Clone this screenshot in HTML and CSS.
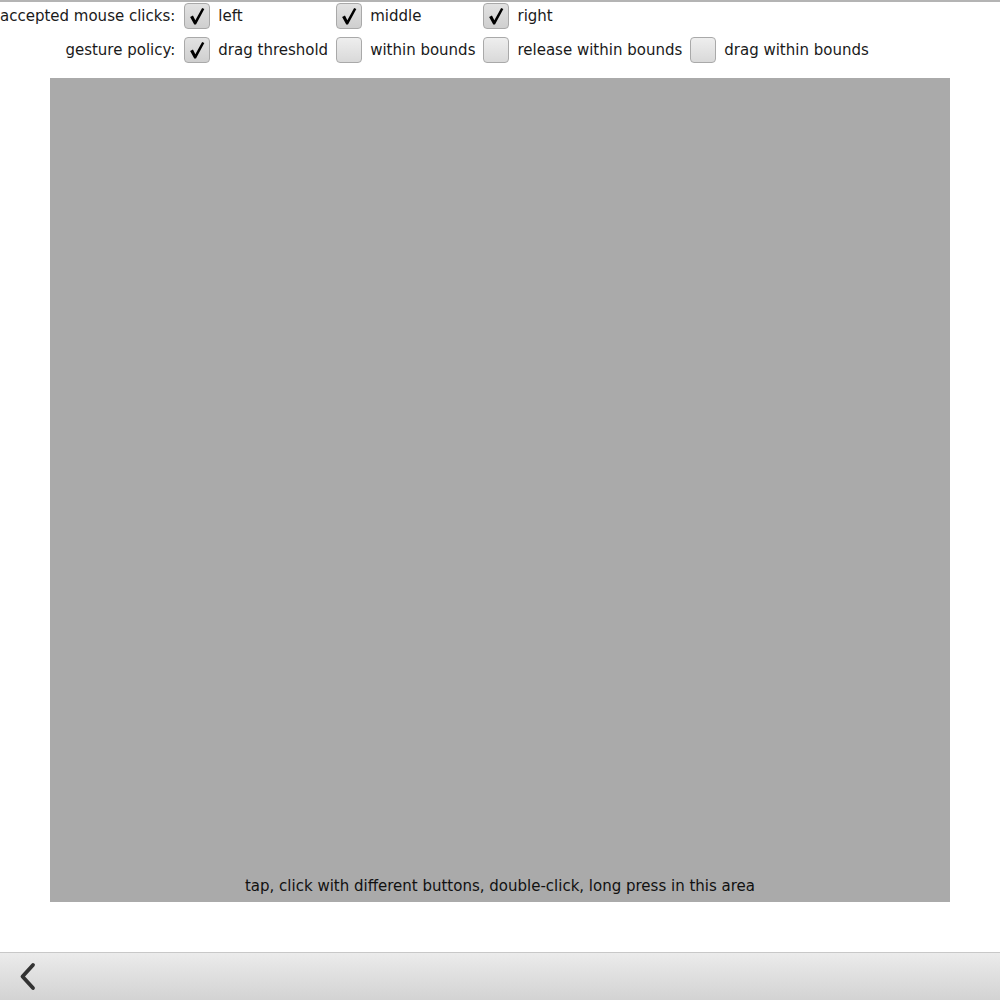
FILE: index.html
```html
<!DOCTYPE html>
<html>
<head>
<meta charset="utf-8">
<link rel="stylesheet" href="styles.css">
</head>
<body>
<div class="page">
  <div class="controls">
    <div class="label">accepted mouse clicks:</div>
    <div class="opt"><span class="box checked"><svg class="tick" viewBox="0 0 24 24"><path d="M4.5 13.2 L7.6 11.4 L10.2 16.6 L17.6 3.2 L20 4.4 L10.9 21.2 L9 21.2 Z"/></svg></span><span>left</span></div>
    <div class="opt"><span class="box checked"><svg class="tick" viewBox="0 0 24 24"><path d="M4.5 13.2 L7.6 11.4 L10.2 16.6 L17.6 3.2 L20 4.4 L10.9 21.2 L9 21.2 Z"/></svg></span><span>middle</span></div>
    <div class="opt"><span class="box checked"><svg class="tick" viewBox="0 0 24 24"><path d="M4.5 13.2 L7.6 11.4 L10.2 16.6 L17.6 3.2 L20 4.4 L10.9 21.2 L9 21.2 Z"/></svg></span><span>right</span></div>
    <div class="opt empty"></div>

    <div class="label">gesture policy:</div>
    <div class="opt"><span class="box checked"><svg class="tick" viewBox="0 0 24 24"><path d="M4.5 13.2 L7.6 11.4 L10.2 16.6 L17.6 3.2 L20 4.4 L10.9 21.2 L9 21.2 Z"/></svg></span><span>drag threshold</span></div>
    <div class="opt"><span class="box"></span><span>within bounds</span></div>
    <div class="opt"><span class="box"></span><span>release within bounds</span></div>
    <div class="opt"><span class="box"></span><span>drag within bounds</span></div>
  </div>
  <div class="area">
    <div class="hint">tap, click with different buttons, double-click, long press in this area</div>
  </div>
  <div class="spacer"></div>
  <div class="toolbar">
    <svg class="back" width="20" height="32" viewBox="0 0 20 32">
      <path d="M15 4 L4.5 15.5 L15 27" fill="none" stroke="#333333" stroke-width="3.8" stroke-linecap="round" stroke-linejoin="round"/>
    </svg>
  </div>
</div>
</body>
</html>
```
FILE: styles.css
```css
html, body {
  margin: 0;
  padding: 0;
  background: #ffffff;
}
body {
  font-family: "DejaVu Sans", sans-serif;
  font-size: 15px;
  color: #1a1a1a;
}
.page {
  height: 1000px;
  display: flex;
  flex-direction: column;
  border-top: 2px solid #b4b4b4;
  box-sizing: border-box;
}
.controls {
  display: grid;
  grid-template-columns: max-content max-content max-content max-content max-content;
  column-gap: 8px;
  row-gap: 8px;
  padding-top: 1px;
  align-items: center;
}
.label {
  text-align: right;
  padding-right: 1px;
  white-space: nowrap;
}
.opt {
  display: flex;
  align-items: center;
  gap: 8px;
  white-space: nowrap;
  height: 26px;
}
.box {
  width: 24px;
  height: 24px;
  border: 1px solid #a9a9a9;
  border-radius: 4px;
  background: linear-gradient(#eeeeee, #d9d9d9);
  display: flex;
  align-items: center;
  justify-content: center;
  flex: none;
}
.box.checked {
  background: linear-gradient(#e2e2e2, #cfcfcf);
}
.tick {
  width: 22px;
  height: 22px;
  fill: #000;
  display: block;
}
.area {
  margin: 15px 50px 0 50px;
  height: 824px;
  background: #aaaaaa;
  display: flex;
  flex-direction: column;
  justify-content: flex-end;
  align-items: center;
}
.hint {
  padding-bottom: 7px;
  color: #111;
}
.spacer {
  flex: 1;
}
.toolbar {
  height: 47px;
  border-top: 1px solid #c8c8c8;
  background: linear-gradient(#ebebeb, #d3d3d3);
  display: flex;
  align-items: center;
  padding-left: 18px;
}
.back {
  display: block;
}
```
